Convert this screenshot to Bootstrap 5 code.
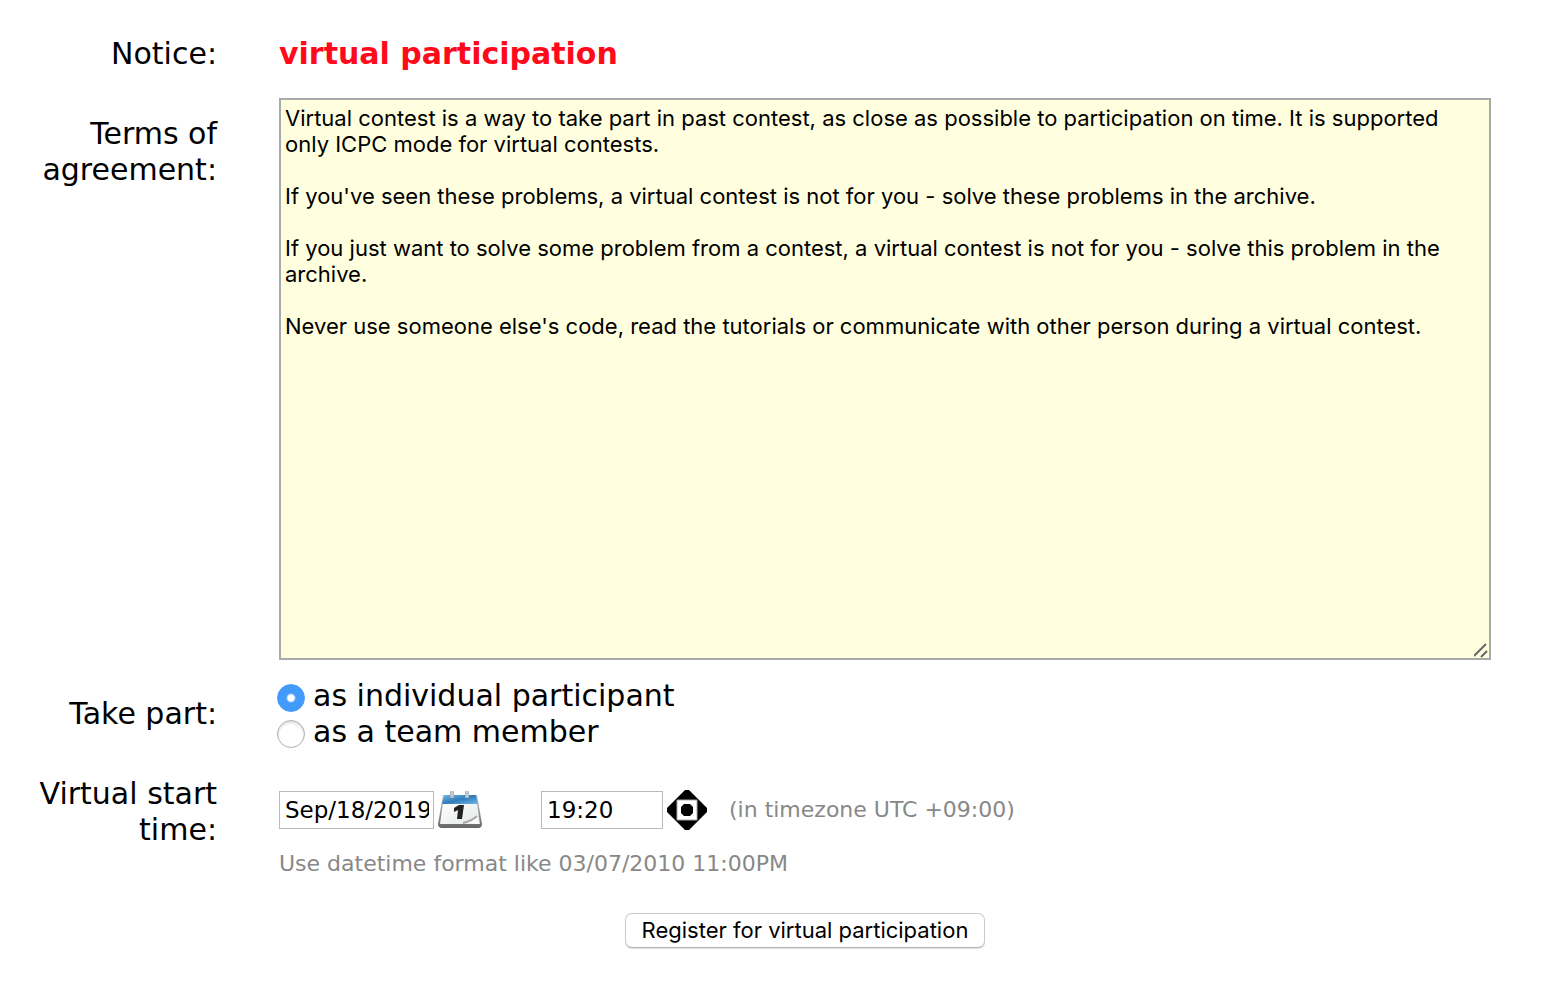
<!DOCTYPE html>
<html lang="en">
<head>
<meta charset="utf-8">
<meta name="viewport" content="width=device-width, initial-scale=1">
<title>Virtual participation</title>
<link href="https://cdn.jsdelivr.net/npm/bootstrap@5.3.0/dist/css/bootstrap.min.css" rel="stylesheet">
<style>
body { font-family: "DejaVu Sans", sans-serif; font-size: 30px; line-height: 36px; color: #000; background: #fff; }
.reg-form { padding: 36px 53px 36px 0; }
.form-line { margin-bottom: 26px; }
.terms-line { margin-bottom: 18px; }
.reg-label { width: 217px; flex: none; text-align: right; padding-left: 30px; margin-right: 62px; }
.terms-label { padding-top: 18px; }
.notice-text { color: #ff0a1b; }
.terms-box { display: block; width: 100%; height: 562px; padding: 5px 4px; border: 2px solid #a9a9a9; border-radius: 0; background: #ffffdf; color: #000; font: 22px/26px Inter, sans-serif; resize: both; }
.terms-box::-webkit-resizer { background: url("data:image/svg+xml,%3Csvg xmlns='http://www.w3.org/2000/svg' width='15' height='15'%3E%3Cpath d='M0 13L12 1M7 14L13 8' stroke='%23666' stroke-width='2'/%3E%3C/svg%3E") no-repeat; }
.reg-radio { appearance: none; width: 28px; height: 28px; flex: none; margin: 6px 8px 0 -2px; border: 1px solid #b0b0b0; border-radius: 50%; background: #fff; box-shadow: inset 0 2px 3px #ddd; }
.reg-radio:checked { border-color: #429bfa; box-shadow: none; background: radial-gradient(circle, #fff 3px, #429bfa 5px); }
.reg-input { height: 38px; padding: 0 4px 0 5px; border: 1px solid #b9b9b9; border-radius: 0; color: #000; background: #fff; font: 23px/36px "DejaVu Sans", sans-serif; }
.date-input { width: 155px; }
.time-input { width: 122px; }
.pick-btn { padding: 0; border: 0; background: none; line-height: 0; margin-left: 4px; }
.date-btn { margin-right: 59px; }
.zone-hint { margin-left: 22px; }
.hint { font-size: 22px; color: #888; }
.start-fields { padding-top: 14px; }
.submit-line { padding-left: 119px; margin-top: 28px; }
.reg-submit { height: 35px; padding: 0 16px; border: 1px solid #ccc; border-bottom-color: #b5b5b5; border-radius: 7px; background: #fff; color: #000; font: 22px/32px Inter, sans-serif; box-shadow: 0 1px 1px #ddd; }
</style>
</head>
<body>
<form class="reg-form">
  <div class="d-flex form-line">
    <div class="reg-label">Notice:</div>
    <strong class="notice-text">virtual participation</strong>
  </div>
  <div class="d-flex terms-line">
    <label class="reg-label terms-label" for="terms">Terms of agreement:</label>
    <div class="flex-grow-1">
      <textarea class="terms-box" id="terms" readonly>Virtual contest is a way to take part in past contest, as close as possible to participation on time. It is supported only ICPC mode for virtual contests.

If you've seen these problems, a virtual contest is not for you - solve these problems in the archive.

If you just want to solve some problem from a contest, a virtual contest is not for you - solve this problem in the archive.

Never use someone else's code, read the tutorials or communicate with other person during a virtual contest.</textarea>
    </div>
  </div>
  <div class="d-flex align-items-center form-line" role="radiogroup" aria-labelledby="part-label">
    <div class="reg-label" id="part-label">Take part:</div>
    <div>
      <div class="d-flex"><input class="reg-radio" type="radio" name="part" id="individual" checked><label for="individual">as individual participant</label></div>
      <div class="d-flex"><input class="reg-radio" type="radio" name="part" id="team"><label for="team">as a team member</label></div>
    </div>
  </div>
  <div class="d-flex">
    <label class="reg-label" for="date">Virtual start time:</label>
    <div class="start-fields">
      <div class="d-flex align-items-center">
        <input class="reg-input date-input" id="date" type="text" value="Sep/18/2019">
        <button class="pick-btn date-btn" type="button" aria-label="Open calendar">
          <svg width="44" height="40" viewBox="0 0 44 40">
            <defs>
              <linearGradient id="sky" x1="0" y1="0" x2="1" y2="1"><stop offset="0" stop-color="#75b9e4"/><stop offset=".5" stop-color="#2f7dbd"/><stop offset="1" stop-color="#71b9e8"/></linearGradient>
              <linearGradient id="edge" x1="0" y1="0" x2="0" y2="1"><stop offset="0" stop-color="#ccc"/><stop offset="1" stop-color="#666"/></linearGradient>
              <linearGradient id="sheet" x1="0" y1="0" x2="1" y2="1"><stop offset="0" stop-color="#fff"/><stop offset="1" stop-color="#e4e7e8"/></linearGradient>
            </defs>
            <path d="M5 5H39L44 34Q44 38 40 38H4Q0 38 0 34Z" fill="url(#edge)"/>
            <path d="M5 13H39L42 34H2Z" fill="url(#sheet)"/>
            <path d="M6 5H38L40 14H4Z" fill="url(#sky)"/>
            <path d="M14 1V8M29 1V8" stroke="#aab4ba" stroke-width="4"/>
            <path d="M14 1V7M29 1V7" stroke="#e3e7e8" stroke-width="1"/>
            <path d="M26 33Q36 31 39 25L41 34Z" fill="#fff"/>
            <path d="M25 33Q34 31 39 26" stroke="#aaa" stroke-width="2" fill="none"/>
            <path d="M16 18L21 15H26L24 29H19L20 20L16 22Z" fill="#222"/>
          </svg>
        </button>
        <input class="reg-input time-input" type="text" value="19:20" aria-label="Start time">
        <button class="pick-btn" type="button" aria-label="Adjust time">
          <svg width="40" height="40" viewBox="0 0 40 40"><path d="M18 0H22L40 18V22L22 40H18L0 22V18Z"/><path d="M10 10H30V30H10Z" fill="#fff" stroke="#aaa"/><path d="M17 14H23L26 17V23L23 26H17L14 23V17Z"/></svg>
        </button>
        <span class="hint zone-hint">(in timezone UTC +09:00)</span>
      </div>
      <div class="hint mt-3">Use datetime format like 03/07/2010 11:00PM</div>
    </div>
  </div>
  <div class="submit-line text-center"><button class="reg-submit" type="submit">Register for virtual participation</button></div>
</form>
<script src="https://cdn.jsdelivr.net/npm/bootstrap@5.3.0/dist/js/bootstrap.bundle.min.js"></script>
</body>
</html>
